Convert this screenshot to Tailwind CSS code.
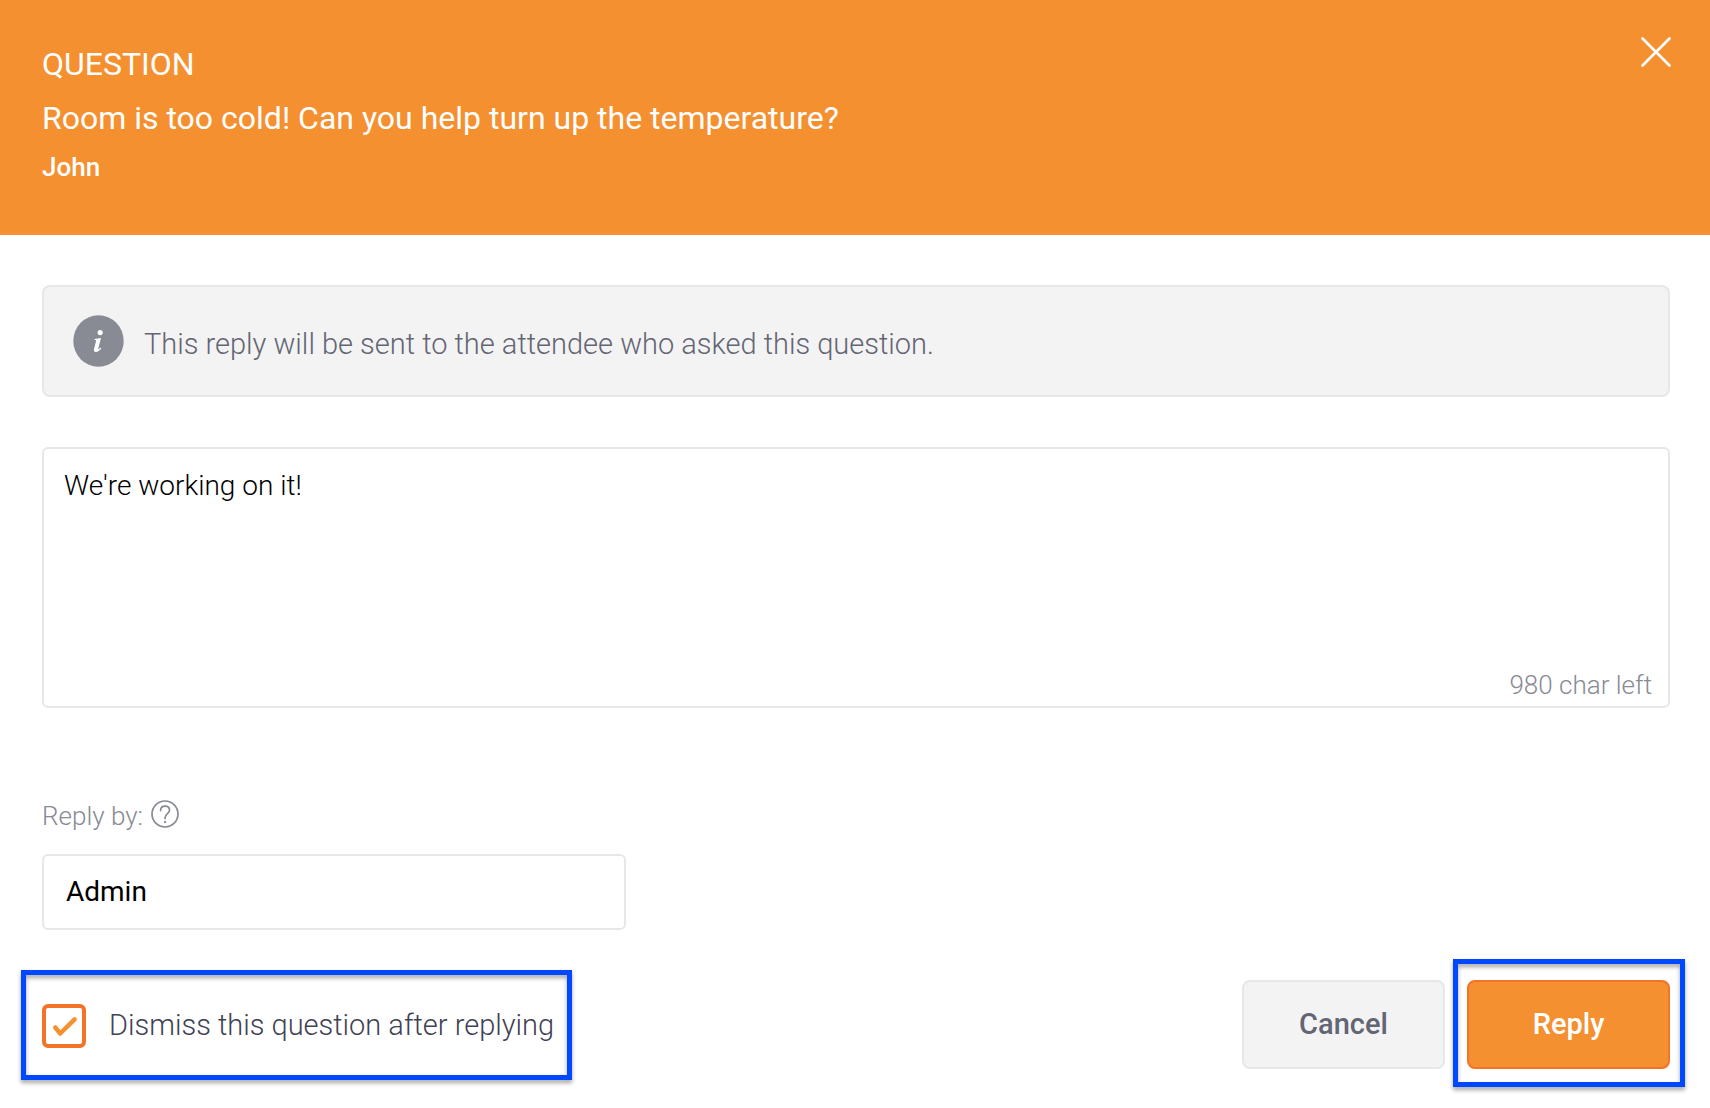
<!DOCTYPE html>
<html lang="en">
<head>
    <meta charset="UTF-8">
    <meta name="viewport" content="width=device-width, initial-scale=1.0">
    <title>Reply to question</title>
    <script src="https://cdn.jsdelivr.net/npm/@tailwindcss/browser@4"></script>
</head>
<body class="min-h-screen bg-white font-['Roboto',sans-serif]">
    <!-- Header -->
    <header class="flex items-start justify-between bg-[#f59030] pt-[38px] pb-11 pl-[42px] pr-[38px] text-white">
        <div>
            <h1 class="text-[32px] leading-[52px]">QUESTION</h1>
            <p class="pt-[2px] text-[32px] leading-[52px]">Room is too cold! Can you help turn up the temperature?</p>
            <p class="text-[26px] leading-[47px] font-medium">John</p>
        </div>
        <button type="button" aria-label="Close" class="-mt-[2px]">
            <svg class="size-8" viewBox="0 0 32 32" fill="none" stroke="currentColor" stroke-width="2.6" stroke-linecap="round">
                <path d="M2.5 2.5 29.5 29.5M29.5 2.5 2.5 29.5"/>
            </svg>
        </button>
    </header>

    <form class="pl-[42px] pr-10 pt-[50px]">
        <!-- Info banner -->
        <div class="flex items-center gap-5 rounded-lg border-2 border-[#e7e7e7] bg-[#f3f3f3] h-28 px-[29px]">
            <svg class="w-[51px] h-[52px] shrink-0" viewBox="0 0 51 52" aria-hidden="true">
                <ellipse cx="25.500" cy="26" rx="25.200" ry="25.800" fill="#888a94"/>
                <circle cx="27.200" cy="17.600" r="2.600" fill="#fff"/>
                <path fill="#fff" d="M21.600 24.100 28 22.900 25.300 33.600C25 34.700 25.700 34.500 27.700 32.600L28.300 33.200C26.300 35.700 24.700 37 22.900 37 21.300 37 20.500 35.900 21 34.100L23 26.300C23.300 25.200 22.900 24.900 21.400 24.900Z"/>
            </svg>
            <p class="pt-[6px] text-[29px] leading-10 font-light text-[#636573]">This reply will be sent to the attendee who asked this question.</p>
        </div>

        <!-- Reply text -->
        <div class="relative mt-[50px]">
            <textarea aria-label="Reply" maxlength="1000" class="block h-[261px] w-full resize-none rounded-md border-2 border-[#e7e7e7] px-5 py-[17px] text-[28px] leading-10 font-light text-black outline-none">We're working on it!</textarea>
            <span class="absolute right-[18px] bottom-[5px] text-[26px] leading-9 font-light text-[#888a94]">980 char left</span>
        </div>

        <!-- Reply by -->
        <div class="mt-[88px] flex items-start gap-2 text-[#888a94]">
            <label for="reply-by" class="text-[26px] leading-10 font-light">Reply by:</label>
            <svg class="mt-1 size-7" viewBox="0 0 28 28" fill="none" stroke="currentColor" stroke-width="1.700" stroke-linecap="round" role="img" aria-label="Help">
                <circle cx="14" cy="14" r="13"/>
                <path d="M9.600 10.600C9.600 7.800 11.500 6.200 14.100 6.200S18.500 7.800 18.500 10.300C18.500 13.600 14.100 13.600 14.100 17.600V18.400"/>
                <circle cx="14.100" cy="22" r=".4"/>
            </svg>
        </div>
        <input id="reply-by" type="text" value="Admin" class="mt-[18px] block h-[76px] w-[584px] max-w-full rounded-md border-2 border-[#e7e7e7] px-[22px] pb-[2px] text-[28px] text-black outline-none">

        <!-- Actions -->
        <div class="mt-[50px] flex items-center justify-between">
            <div class="relative pt-[2px]">
                <label class="flex items-end gap-[23px] text-[29px] leading-[45px] font-light text-[#3f4254]">
                    <span class="relative block size-11">
                        <input type="checkbox" checked class="peer block size-11 appearance-none rounded-md border-4 border-[#f37429] bg-white">
                        <svg class="pointer-events-none absolute inset-0 hidden size-11 peer-checked:block" viewBox="0 0 44 44" fill="none" stroke="#f69130" stroke-width="4.500" stroke-linecap="round" stroke-linejoin="round">
                            <path d="M13.300 23.500 18.200 29.500 32.600 15.400"/>
                        </svg>
                    </span>
                    Dismiss this question after replying
                </label>
                <div class="pointer-events-none absolute -left-[21px] -right-[18px] -top-[31px] -bottom-8 border-5 border-[#0048ff] drop-shadow-[0_3px_2px_rgba(0,0,0,0.35)]"></div>
            </div>
            <div class="flex gap-[22px]">
                <button type="button" class="h-[89px] w-[203px] rounded-lg border-2 border-[#e7e7e7] bg-[#f3f3f3] text-[29px] font-medium text-[#636573]">Cancel</button>
                <div class="relative">
                    <button type="submit" class="block h-[89px] w-[203px] rounded-lg border-2 border-[#f37429] bg-[#f59030] text-[29px] font-medium text-white">Reply</button>
                    <div class="pointer-events-none absolute -left-[14px] -right-[15px] -top-[21px] -bottom-[18px] border-5 border-[#0048ff] drop-shadow-[0_3px_2px_rgba(0,0,0,0.35)]"></div>
                </div>
            </div>
        </div>
    </form>
</body>
</html>
